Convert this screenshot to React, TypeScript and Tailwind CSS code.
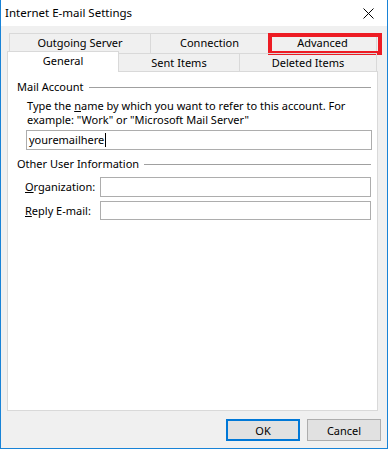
export default function App() {
  return (
    <div className="w-[388px] h-[449px] flex flex-col bg-[#f0f0f0] border-x border-b border-[#1883d7] text-black text-[11px] font-['Noto_Sans',sans-serif] overflow-hidden whitespace-nowrap">
      <div className="h-[26px] bg-white flex items-center justify-between pl-[4px] pr-[13px] shrink-0">
        <span className="text-[11.5px] leading-none">Internet E-mail Settings</span>
        <svg width="11" height="11" viewBox="0 0 11 11">
          <path d="M0.5 0.5 L10.5 10.5 M10.5 0.5 L0.5 10.5" stroke="#000" strokeWidth="1" fill="none" />
        </svg>
      </div>
      <div className="flex-1 flex flex-col pt-[7px]">
        <div className="ml-[8px] flex h-[20px]">
          <div className="w-[141px] border-t border-l border-[#d9d9d9] flex justify-center pt-[1px] leading-[16px]">Outgoing Server</div>
          <div className="w-[118px] border-t border-l border-[#d9d9d9] flex justify-center pt-[1px] leading-[16px]">Connection</div>
          <div className="relative w-[109px] border-t border-l border-r border-[#d9d9d9] flex justify-center pt-[1px] leading-[16px]">
            Advanced
            <div className="absolute left-[-1px] top-[-1px] w-[114px] h-[22px] border-[4px] border-[#ed1c24]" />
          </div>
        </div>
        <div className="relative z-10 -mt-[2px] ml-[6px] flex items-end h-[20px]">
          <div className="w-[112px] h-[21px] -mb-[1px] bg-white border-t border-x border-[#d9d9d9] flex justify-center pt-[1px] leading-[16px]">General</div>
          <div className="w-[121px] h-[18px] border-t border-r border-[#d9d9d9] flex justify-center leading-[17px]">Sent Items</div>
          <div className="w-[137px] h-[18px] border-t border-r border-[#d9d9d9] flex justify-center leading-[17px]">Deleted Items</div>
        </div>
        <div className="ml-[6px] w-[371px] h-[340px] bg-white border border-[#d9d9d9] pl-[9px] pr-[6px] pt-[7px] flex flex-col">
          <div className="flex items-center h-[16px]">
            <span className="leading-[16px]">Mail Account</span>
            <div className="flex-1 ml-[5px] h-px bg-[#a0a0a0]" />
          </div>
          <div className="mt-[4px] pl-[10px] leading-[14px]">
            Type the <span className="underline">n</span>ame by which you want to refer to this account. For
            <br />
            example: "Work" or "Microsoft Mail Server"
          </div>
          <div className="mt-[3px] ml-[9px] w-[346px] h-[20px] border border-[#adadad] flex items-center pl-[2px]">
            <span className="leading-[16px]">youremailhere</span>
            <span className="w-px h-[14px] bg-black ml-[1px]" />
          </div>
          <div className="mt-[6px] flex items-center h-[16px]">
            <span className="leading-[16px]">Other User Information</span>
            <div className="flex-1 ml-[5px] h-px bg-[#a0a0a0]" />
          </div>
          <div className="mt-[5px] flex items-center h-[20px] pl-[8px]">
            <span className="w-[75px] leading-[16px]"><span className="underline">O</span>rganization:</span>
            <div className="w-[272px] h-[20px] border border-[#adadad]" />
          </div>
          <div className="mt-[4px] flex items-center h-[19px] pl-[8px]">
            <span className="w-[75px] leading-[16px]"><span className="underline">R</span>eply E-mail:</span>
            <div className="w-[272px] h-[19px] border border-[#adadad]" />
          </div>
        </div>
        <div className="mt-[8px] flex justify-end gap-[7px] pr-[6px]">
          <button className="w-[74px] h-[22px] border-2 border-[#0078d7] bg-[#e1e1e1] flex items-center justify-center leading-none">OK</button>
          <button className="w-[74px] h-[22px] border border-[#adadad] bg-[#e1e1e1] flex items-center justify-center leading-none">Cancel</button>
        </div>
      </div>
    </div>
  );
}
